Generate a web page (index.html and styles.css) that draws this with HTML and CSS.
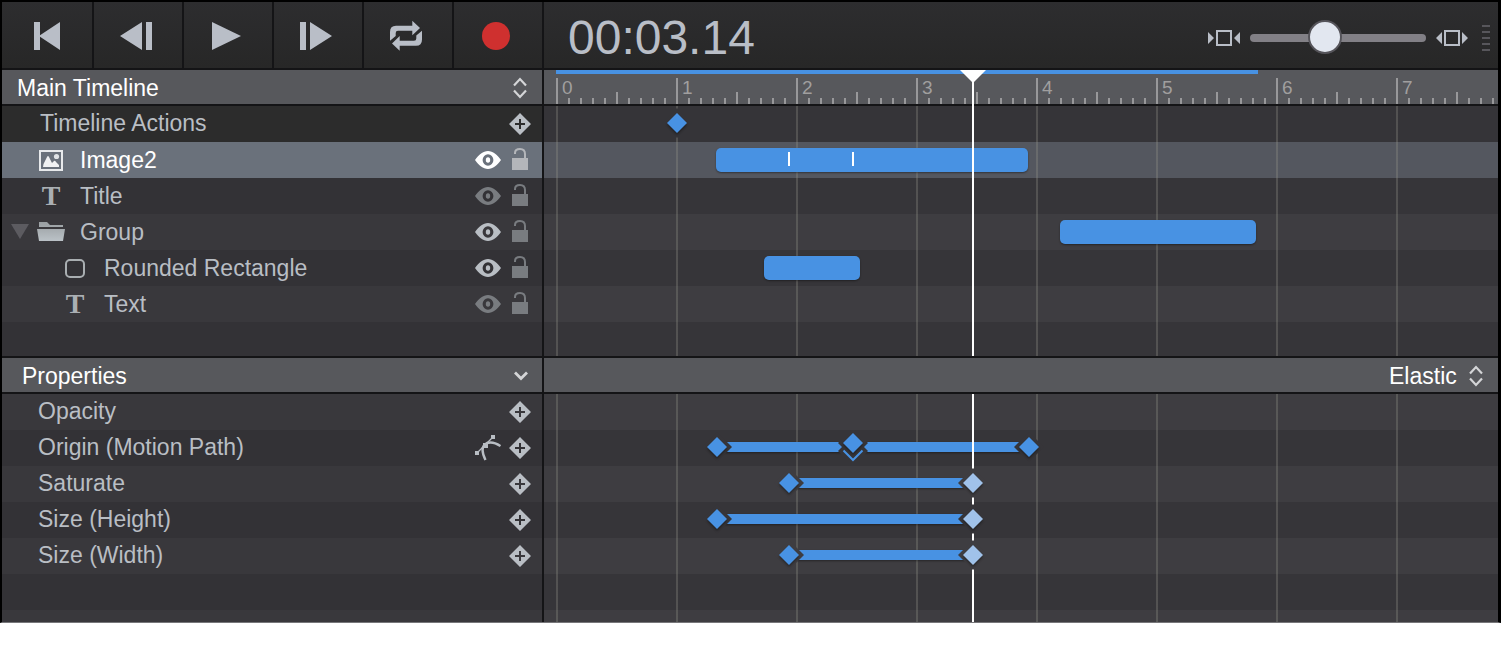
FILE: index.html
```html
<!DOCTYPE html>
<html lang="en">
<head>
<meta charset="utf-8">
<title>Timeline</title>
<link rel="stylesheet" href="styles.css">
</head>
<body>
<svg class="defs" aria-hidden="true">
  <defs>
    <linearGradient id="metal" x1="0" y1="0" x2="0" y2="1"><stop offset="0" stop-color="#999ea1"/><stop offset="1" stop-color="#bbc2c7"/></linearGradient>
    <symbol id="add" viewBox="0 0 22 22"><path fill="currentColor" fill-rule="evenodd" d="M11 0L22 11L11 22L0 11ZM10 6V10H6V12H10V16H12V12H16V10H12V6Z"/></symbol>
    <symbol id="eye" viewBox="0 0 26 18"><path fill="currentColor" fill-rule="evenodd" d="M0 9C4 3.500 8 0 13 0S22 3.500 26 9C22 14.500 18 18 13 18S4 14.500 0 9ZM13 3.200A5.400 5.800 0 1 0 13 14.800A5.400 5.800 0 1 0 13 3.200Z"/><ellipse cx="13" cy="9" rx="2.200" ry="2.700" fill="currentColor"/></symbol>
    <symbol id="lock" viewBox="0 0 16 24"><path fill="currentColor" d="M0 10H16V22H0Z"/><path fill="none" stroke="currentColor" stroke-width="2" d="M3 6V5Q3 1 8 1Q13 1 13 6V10"/></symbol>
    <symbol id="updown" viewBox="0 0 14 22"><path fill="none" stroke="currentColor" stroke-width="2.200" d="M1 8.500L7 2L13 8.500M1 13.500L7 20L13 13.500"/></symbol>
    <symbol id="key" viewBox="0 0 36 36"><path class="halo" d="M18 2L33 17L18 32L3 17Z"/><path class="gem" d="M18 7L28 17L18 27L8 17Z"/></symbol>
    <symbol id="keys" viewBox="0 0 36 36"><path class="halo" d="M18-2L33 13L29 17L33 21L18 36L3 21L7 17L3 13Z"/><path class="gem" d="M18 3L28 13L18 23L8 13Z"/><path class="vee" d="M8.500 20.500L18 30L27.500 20.500"/></symbol>
  </defs>
</svg>

<main class="app">
  <header class="toolbar">
    <div class="transport">
      <button type="button" aria-label="Go to start"><svg viewBox="0 0 40 32"><path d="M7 2H13V15.300L33 2V30L13 16.700V30H7Z"/></svg></button>
      <button type="button" aria-label="Step back"><svg viewBox="0 0 40 32"><path d="M24 2V30L2 16ZM28 2H34V30H28Z"/></svg></button>
      <button type="button" aria-label="Play"><svg viewBox="0 0 40 32"><path d="M4 2L33 16L4 30Z"/></svg></button>
      <button type="button" aria-label="Step forward"><svg viewBox="0 0 40 32"><path d="M2 2H8V30H2ZM12 2L34 16L12 30Z"/></svg></button>
      <button type="button" aria-label="Loop"><svg viewBox="0 0 40 32"><path id="loop" d="M2 20.700V12Q2 5.700 8 5.700H24.300V.7L32 8L24.300 15.300V10.700H10Q7.700 10.700 7.700 13V16Z"/><use href="#loop" transform="rotate(180 18 15.700)"/></svg></button>
      <button type="button" aria-label="Record"><svg viewBox="0 0 40 32"><circle class="record" cx="18" cy="16" r="14"/></svg></button>
    </div>
    <div class="readout">
      <output class="timecode">00:03.14</output>
      <div class="zoom">
        <svg class="zoom-icon" viewBox="0 0 32 16"><path d="M0 2L6 8L0 14ZM32 2L26 8L32 14Z"/><path class="frame" d="M9 1H23V15H9Z"/></svg>
        <input type="range" min="0" max="100" value="41" aria-label="Timeline zoom">
        <svg class="zoom-icon" viewBox="0 0 32 16"><path d="M6 2L0 8L6 14ZM26 2L32 8L26 14Z"/><path class="frame" d="M9 1H23V15H9Z"/></svg>
        <span class="grip"></span>
      </div>
    </div>
  </header>

  <section class="panel" aria-label="Timeline">
    <div class="row head">
      <label class="side picker main-picker">
        <select aria-label="Timeline"><option>Main Timeline</option></select>
        <svg class="updown"><use href="#updown"/></svg>
      </label>
      <div class="lane">
        <div class="ruler">
          <div class="duration" style="width:702px"></div>
          <div class="seconds"><span>0</span><span>1</span><span>2</span><span>3</span><span>4</span><span>5</span><span>6</span><span>7</span></div>
        </div>
      </div>
    </div>
    <div class="row actions">
      <div class="side"><span class="name">Timeline Actions</span><button type="button" class="icon" aria-label="Add action"><svg class="add"><use href="#add"/></svg></button></div>
      <div class="lane"><div class="track"><svg class="key" style="left:120px"><use href="#key"/></svg></div></div>
    </div>
    <div class="row layer selected">
      <div class="side">
        <span class="kind"><svg width="24" height="22" viewBox="0 0 24 22"><path fill="none" stroke="#e8eaec" stroke-width="2" d="M1 2H23V21H1Z"/><path fill="#f0f1f2" d="M4 18L4.500 15L8 8Q9 6 10 8L13 14L15 12Q16 11 17 13L20 16V18Z"/><circle cx="17.500" cy="7.500" r="2.600" fill="#e0e3e6"/></svg></span>
        <span class="name">Image2</span>
        <button type="button" class="icon on" aria-label="Hide Image2"><svg class="eye"><use href="#eye"/></svg></button>
        <button type="button" class="icon" aria-label="Lock Image2"><svg class="lock"><use href="#lock"/></svg></button>
      </div>
      <div class="lane"><div class="track"><div class="clip" style="left:160px;width:312px"><i style="left:72px"></i><i style="left:136px"></i></div></div></div>
    </div>
    <div class="row layer">
      <div class="side">
        <span class="kind serif">T</span><span class="name">Title</span>
        <button type="button" class="icon" aria-label="Show Title"><svg class="eye"><use href="#eye"/></svg></button>
        <button type="button" class="icon" aria-label="Lock Title"><svg class="lock"><use href="#lock"/></svg></button>
      </div>
      <div class="lane"></div>
    </div>
    <div class="row layer alt group">
      <div class="side">
        <button type="button" class="icon disclosure" aria-label="Collapse Group"><svg width="18" height="16" viewBox="0 0 18 16"><path fill="#5c5b60" d="M0 0H18L9 15Z"/></svg></button>
        <span class="kind"><svg width="28" height="20" viewBox="0 0 28 20"><path fill="url(#metal)" d="M2 0H10L13 3H26V5H2ZM0 7H28L26 19H2Z"/></svg></span>
        <span class="name">Group</span>
        <button type="button" class="icon on" aria-label="Hide Group"><svg class="eye"><use href="#eye"/></svg></button>
        <button type="button" class="icon" aria-label="Lock Group"><svg class="lock"><use href="#lock"/></svg></button>
      </div>
      <div class="lane"><div class="track"><div class="clip" style="left:504px;width:196px"></div></div></div>
    </div>
    <div class="row layer child">
      <div class="side">
        <span class="kind"><svg width="20" height="19" viewBox="0 0 20 19"><rect x="1" y="1" width="18" height="17" rx="4" fill="none" stroke="#a9aeb1" stroke-width="2"/></svg></span>
        <span class="name">Rounded Rectangle</span>
        <button type="button" class="icon on" aria-label="Hide Rounded Rectangle"><svg class="eye"><use href="#eye"/></svg></button>
        <button type="button" class="icon" aria-label="Lock Rounded Rectangle"><svg class="lock"><use href="#lock"/></svg></button>
      </div>
      <div class="lane"><div class="track"><div class="clip" style="left:208px;width:96px"></div></div></div>
    </div>
    <div class="row layer alt child">
      <div class="side">
        <span class="kind serif">T</span><span class="name">Text</span>
        <button type="button" class="icon" aria-label="Show Text"><svg class="eye"><use href="#eye"/></svg></button>
        <button type="button" class="icon" aria-label="Lock Text"><svg class="lock"><use href="#lock"/></svg></button>
      </div>
      <div class="lane"></div>
    </div>
    <div class="row last"><div class="side"></div><div class="lane"></div></div>
    <div class="playhead"><svg width="26" height="13" viewBox="0 0 26 13"><path fill="#fff" d="M0 0H26L13 13Z"/></svg></div>
  </section>

  <div class="row head props-head">
    <div class="side"><h2>Properties</h2><button type="button" class="icon" aria-label="Collapse properties"><svg width="14" height="10" viewBox="0 0 14 10"><path fill="none" stroke="#d4d5d7" stroke-width="2.800" d="M1 1.500L7 7.500L13 1.500"/></svg></button></div>
    <div class="lane">
      <label class="picker easing">
        <select aria-label="Timing function"><option>Elastic</option></select>
        <svg class="updown"><use href="#updown"/></svg>
      </label>
    </div>
  </div>

  <section class="panel" aria-label="Properties">
    <div class="row prop alt">
      <div class="side"><span class="name">Opacity</span><button type="button" class="icon" aria-label="Add Opacity keyframe"><svg class="add"><use href="#add"/></svg></button></div>
      <div class="lane"></div>
    </div>
    <div class="row prop">
      <div class="side"><span class="name">Origin (Motion Path)</span><button type="button" class="icon" aria-label="Edit motion path"><svg width="26" height="26" viewBox="0 0 26 26"><path fill="currentColor" d="M0 16H4V20H0ZM16 0H20V4H16ZM8 8H13V13H8Z"/><path fill="none" stroke="currentColor" stroke-width="1.300" d="M2 18L18 2"/><path fill="none" stroke="currentColor" stroke-width="2.400" d="M10.500 25Q4 12 12 8Q18 6 25.500 11"/></svg></button><button type="button" class="icon" aria-label="Add Origin keyframe"><svg class="add"><use href="#add"/></svg></button></div>
      <div class="lane"><div class="track"><div class="tween" style="left:160px;width:312px"></div><svg class="key" style="left:160px"><use href="#key"/></svg><svg class="key" style="left:296px"><use href="#keys"/></svg><svg class="key" style="left:472px"><use href="#key"/></svg></div></div>
    </div>
    <div class="row prop alt">
      <div class="side"><span class="name">Saturate</span><button type="button" class="icon" aria-label="Add Saturate keyframe"><svg class="add"><use href="#add"/></svg></button></div>
      <div class="lane"><div class="track"><div class="tween" style="left:232px;width:184px"></div><svg class="key" style="left:232px"><use href="#key"/></svg><svg class="key current" style="left:416px"><use href="#key"/></svg></div></div>
    </div>
    <div class="row prop">
      <div class="side"><span class="name">Size (Height)</span><button type="button" class="icon" aria-label="Add Height keyframe"><svg class="add"><use href="#add"/></svg></button></div>
      <div class="lane"><div class="track"><div class="tween" style="left:160px;width:256px"></div><svg class="key" style="left:160px"><use href="#key"/></svg><svg class="key current" style="left:416px"><use href="#key"/></svg></div></div>
    </div>
    <div class="row prop alt">
      <div class="side"><span class="name">Size (Width)</span><button type="button" class="icon" aria-label="Add Width keyframe"><svg class="add"><use href="#add"/></svg></button></div>
      <div class="lane"><div class="track"><div class="tween" style="left:232px;width:184px"></div><svg class="key" style="left:232px"><use href="#key"/></svg><svg class="key current" style="left:416px"><use href="#key"/></svg></div></div>
    </div>
    <div class="row"><div class="side"></div><div class="lane"></div></div>
    <div class="row alt stub"><div class="side"></div><div class="lane"></div></div>
    <div class="playhead"></div>
  </section>
</main>
</body>
</html>
```

FILE: styles.css
```css
* { box-sizing: border-box; }

body {
  margin: 0;
  background: #fff;
  font-family: "Liberation Sans", Arial, sans-serif;
  font-size: 23px;
  line-height: 28px;
  color: #b9bec4;
}

svg { display: block; flex: none; }
.defs { position: absolute; width: 0; height: 0; }

button, select {
  margin: 0;
  padding: 0;
  border: 0;
  background: none;
  color: inherit;
  font: inherit;
}

.app {
  border: solid #000;
  border-width: 2px 3px 0 2px;
  border-bottom: 1px solid #77777a;
  overflow: hidden;
}

/* Toolbar */
.toolbar, .row {
  display: grid;
  grid-template-columns: 542px minmax(0, 1fr);
}
.toolbar {
  height: 68px;
  border-bottom: 2px solid #141416;
  background: linear-gradient(#2d2d2f, #272727);
}
.transport {
  display: grid;
  grid-template-columns: 92px repeat(5, 90px);
}
.transport button {
  display: flex;
  align-items: center;
  justify-content: center;
  padding-top: 2px;
  border-right: 2px solid #141416;
}
.transport svg { width: 40px; height: 32px; fill: #b9bec7; }
.transport .record { fill: #cf302f; }

.readout {
  display: flex;
  align-items: center;
  justify-content: space-between;
  padding: 6px 8px 0 24px;
}
.timecode { font-size: 48px; line-height: 56px; color: #b9bec7; }
.zoom { display: flex; align-items: center; }
.zoom-icon { width: 32px; height: 16px; fill: #b9bec7; }
.zoom-icon .frame { fill: none; stroke: #b9bec7; stroke-width: 2; }

input[type="range"] {
  appearance: none;
  width: 176px;
  height: 34px;
  margin: 0 10px;
  background: none;
}
input[type="range"]::-webkit-slider-runnable-track {
  height: 8px;
  border-radius: 4px;
  background: #828086;
}
input[type="range"]::-webkit-slider-thumb {
  appearance: none;
  width: 34px;
  height: 34px;
  margin-top: -14px;
  border: 2px solid #55545a;
  border-radius: 50%;
  background: #e2e7f0;
}
.grip {
  width: 8px;
  height: 26px;
  margin-left: 14px;
  background: repeating-linear-gradient(#57565b 0 2px, transparent 2px 6px);
}

/* Rows */
.panel { position: relative; overflow: hidden; }
.row { height: 36px; --side: #333236; --lane: #363539; }
.row.alt { --side: #39383c; --lane: #3e3d41; }
.row.actions { --side: #2c2c2c; --lane: #353438; }
.row.selected { --side: #6a717b; --lane: #54575f; color: #fff; }
.row.last { height: 36px; border-bottom: 2px solid #141416; }
.row.stub { height: 12px; }

.side {
  display: flex;
  align-items: center;
  border-right: 2px solid #141416;
  background: var(--side);
}
.lane {
  min-width: 0;
  padding-left: 12px;
  background-color: var(--lane);
  background-image: linear-gradient(to right, rgba(150, 150, 140, 0.3) 2px, transparent 2px);
  background-size: 120px 100%;
  background-position: 12px 0;
}
.name { flex: 1; white-space: nowrap; }

.head {
  --side: #57585c;
  --lane: #57585c;
  border-bottom: 2px solid #141416;
  color: #fff;
}
.head .lane { background-image: none; }
.head select { appearance: none; outline: 0; }
.head h2 { flex: 1; margin: 0; font-size: 23px; font-weight: 400; }
.head .side { padding: 2px 14px 0 20px; }
.head .side.main-picker { padding: 2px 15px 0 15px; }
.picker { display: flex; align-items: center; }
.main-picker select { flex: 1; }
.updown { width: 14px; height: 22px; color: #d4d5d7; }
.easing {
  justify-content: flex-end;
  gap: 12px;
  height: 34px;
  padding: 2px 15px 0 0;
}

/* Ruler */
.ruler {
  height: 34px;
  overflow: hidden;
  background-image:
    linear-gradient(to right, #98989a 2px, transparent 2px),
    linear-gradient(to right, #98989a 2px, transparent 2px),
    linear-gradient(to right, #98989a 2px, transparent 2px);
  background-size: 120px 26px, 120px 12px, 12px 6px;
  background-position: 0 100%, 60px 100%, 0 100%;
  background-repeat: repeat-x;
}
.duration { height: 4px; background: #4892e3; }
.seconds {
  display: flex;
  padding-top: 3px;
  font-size: 19px;
  line-height: 22px;
  color: #a09f9f;
}
.seconds span { flex: 0 0 120px; padding-left: 6px; }

/* Side cells */
.actions .side { padding: 0 11px 0 38px; }
.actions .name, .prop .name { padding-bottom: 3px; }
.prop .side { padding: 0 11px 0 36px; }
.prop .side { gap: 8px; }
.layer .side { padding: 0 14px 0 35px; }
.layer.group .side { padding-left: 9px; }
.layer.child .side { padding-left: 59px; }
.layer .name { padding-left: 15px; }

.kind { display: flex; flex: none; justify-content: center; width: 28px; }
.serif {
  font: bold 28px/28px "Liberation Serif", "Times New Roman", serif;
  color: #aaafb3;
}
.icon { flex: none; color: #b9bec4; }
.disclosure { margin-right: 8px; }
.add { width: 22px; height: 22px; }
.eye { width: 26px; height: 18px; }
.lock { width: 16px; height: 24px; }
.layer .icon { color: #797c80; }
.layer .icon.on { color: #b9bec4; }
.layer .icon + .icon { margin-left: 11px; }
.layer.selected .icon { color: #b4b6ba; }
.layer.selected .icon.on { color: #fff; }

/* Tracks: everything here is placed by time, 120px to the second */
.track { position: relative; height: 36px; }
.clip {
  position: absolute;
  z-index: 1;
  top: 6px;
  height: 24px;
  border-radius: 5px;
  background: #4892e3;
  box-shadow: 0 1px 2px rgba(0, 0, 0, 0.4);
}
.clip i {
  position: absolute;
  top: 4px;
  width: 2px;
  height: 14px;
  background: #fff;
}
.tween {
  position: absolute;
  z-index: 1;
  top: 12px;
  height: 10px;
  background: #4892e3;
  box-shadow: 0 1px 2px rgba(0, 0, 0, 0.4);
}
.key {
  position: absolute;
  z-index: 3;
  top: 0;
  width: 36px;
  height: 36px;
  margin-left: -17px;
  color: #4892e3;
}
.key.current { color: #a0c2ea; }
.halo { fill: var(--lane); }
.gem { fill: currentColor; filter: drop-shadow(0 2px 1px rgba(0, 0, 0, 0.35)); }
.vee { fill: none; stroke: currentColor; stroke-width: 2; }

.playhead {
  position: absolute;
  z-index: 2;
  top: 0;
  bottom: 0;
  left: 970px;
  width: 2px;
  background: #fff;
}
.panel .playhead svg { margin-left: -12px; }
.row.last ~ .playhead { bottom: 2px; }
```
